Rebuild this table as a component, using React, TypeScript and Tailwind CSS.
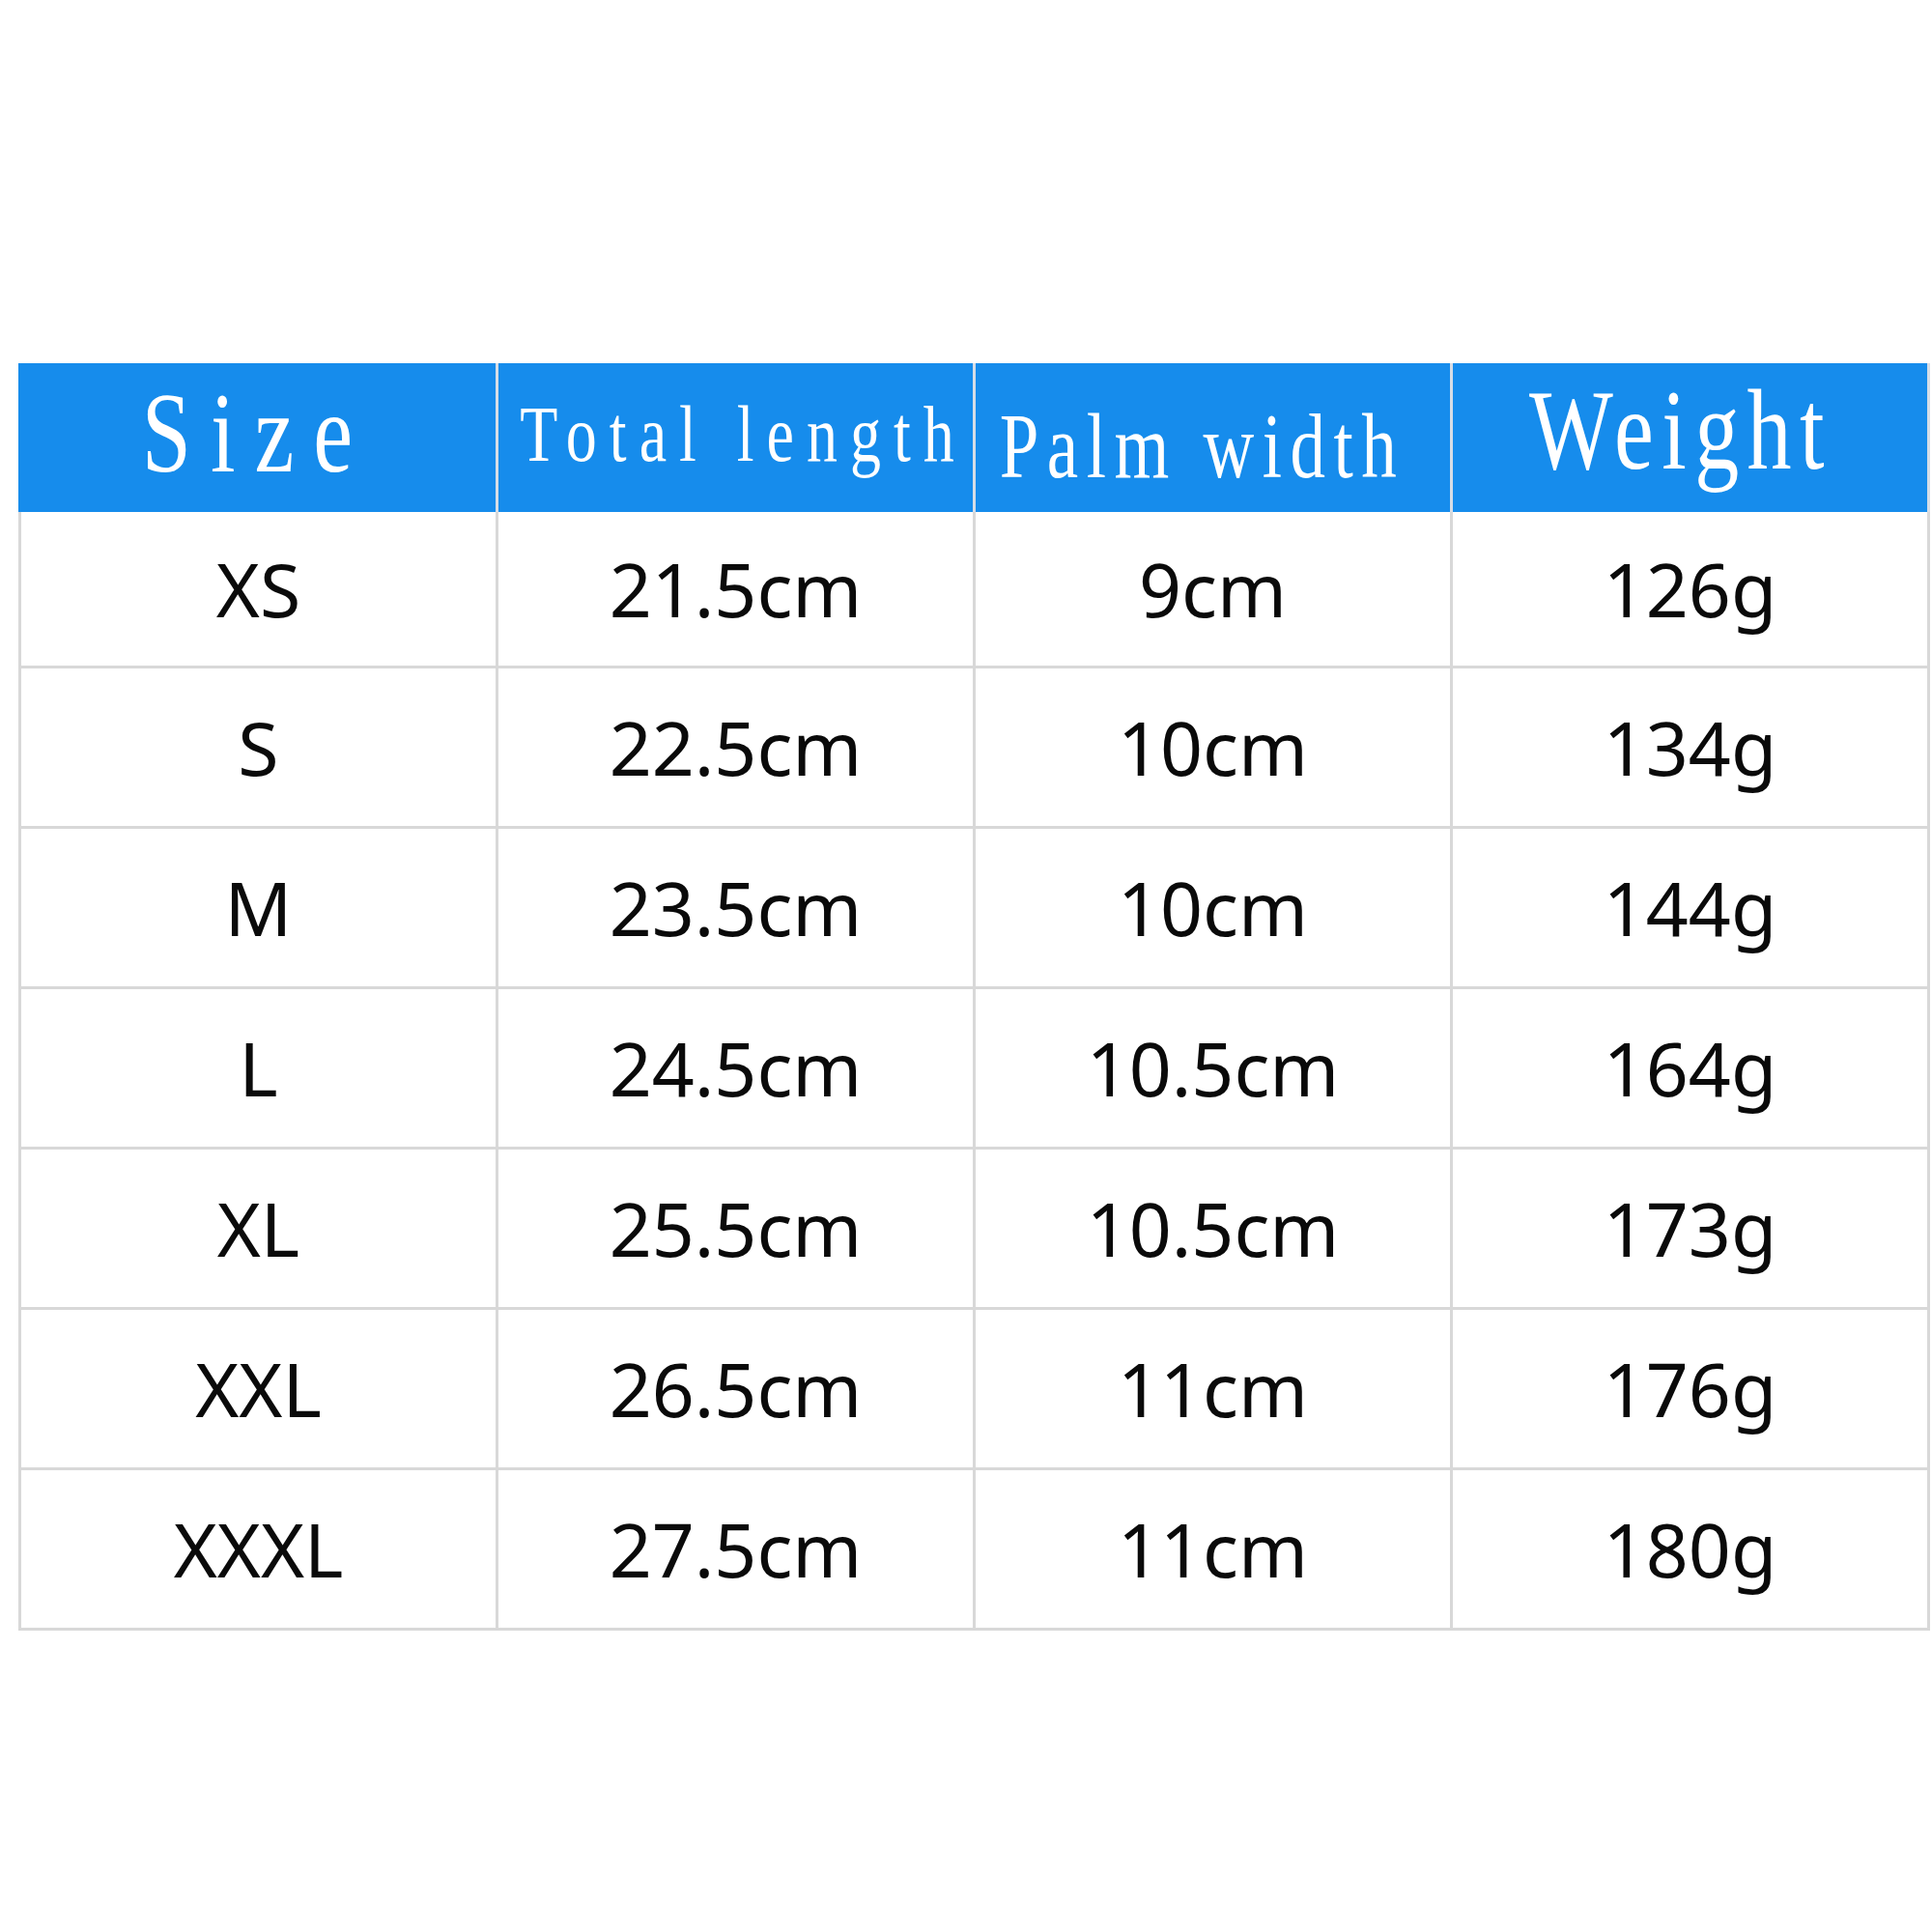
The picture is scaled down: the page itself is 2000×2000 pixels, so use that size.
import React from "react";

const rows: [string, string, string, string][] = [
  ["XS", "21.5cm", "9cm", "126g"],
  ["S", "22.5cm", "10cm", "134g"],
  ["M", "23.5cm", "10cm", "144g"],
  ["L", "24.5cm", "10.5cm", "164g"],
  ["XL", "25.5cm", "10.5cm", "173g"],
  ["XXL", "26.5cm", "11cm", "176g"],
  ["XXXL", "27.5cm", "11cm", "180g"],
];

const serif = { fontFamily: '"Liberation Serif", "Times New Roman", serif' };

export default function App() {
  return (
    <div className="w-[2000px] h-[2000px] bg-white pt-[376px] pl-[19px]">
      <div className="w-[1979px]">
        {/* header */}
        <div className="flex h-[154px] bg-[#168cec] text-white" style={serif}>
          <div className="w-[497px] h-full flex items-center justify-center border-r-[3px] border-[#d6dde6] pb-[10px]">
            <span className="inline-block text-[92px] leading-none tracking-[20px] scale-y-130 whitespace-pre">Size</span>
          </div>
          <div className="w-[494px] h-full flex items-center justify-center border-r-[3px] border-[#d6dde6] pl-[16px] pb-[6px]">
            <span className="inline-block text-[64px] leading-none tracking-[13px] scale-y-130 whitespace-pre">Total length</span>
          </div>
          <div className="w-[494px] h-full flex items-center justify-center border-r-[3px] border-[#d6dde6] pr-[22px] pt-[18px]">
            <span className="inline-block text-[73px] leading-none tracking-[8.5px] scale-y-130 whitespace-pre">Palm width</span>
          </div>
          <div className="w-[494px] h-full flex items-center justify-center border-r-[3px] border-[#d6dde6] pr-[19px] pb-[16px]">
            <span className="inline-block text-[92px] leading-none tracking-[8.4px] scale-y-130 whitespace-pre">Weight</span>
          </div>
        </div>
        {/* body */}
        <div
          className="border-l-[3px] border-[#d8d8d8] text-[#0a0a0a]"
          style={{ fontFamily: '"Noto Sans", "Open Sans", sans-serif' }}
        >
          {rows.map((r, i) => (
            <div
              key={i}
              className={`flex border-b-[3px] border-[#d8d8d8] ${i === 0 ? "h-[162px]" : "h-[166px]"}`}
            >
              {r.map((c, j) => (
                <div
                  key={j}
                  className="w-[494px] h-full flex items-center justify-center border-r-[3px] border-[#d8d8d8] text-[77px] leading-none"
                >
                  {c}
                </div>
              ))}
            </div>
          ))}
        </div>
      </div>
    </div>
  );
}
